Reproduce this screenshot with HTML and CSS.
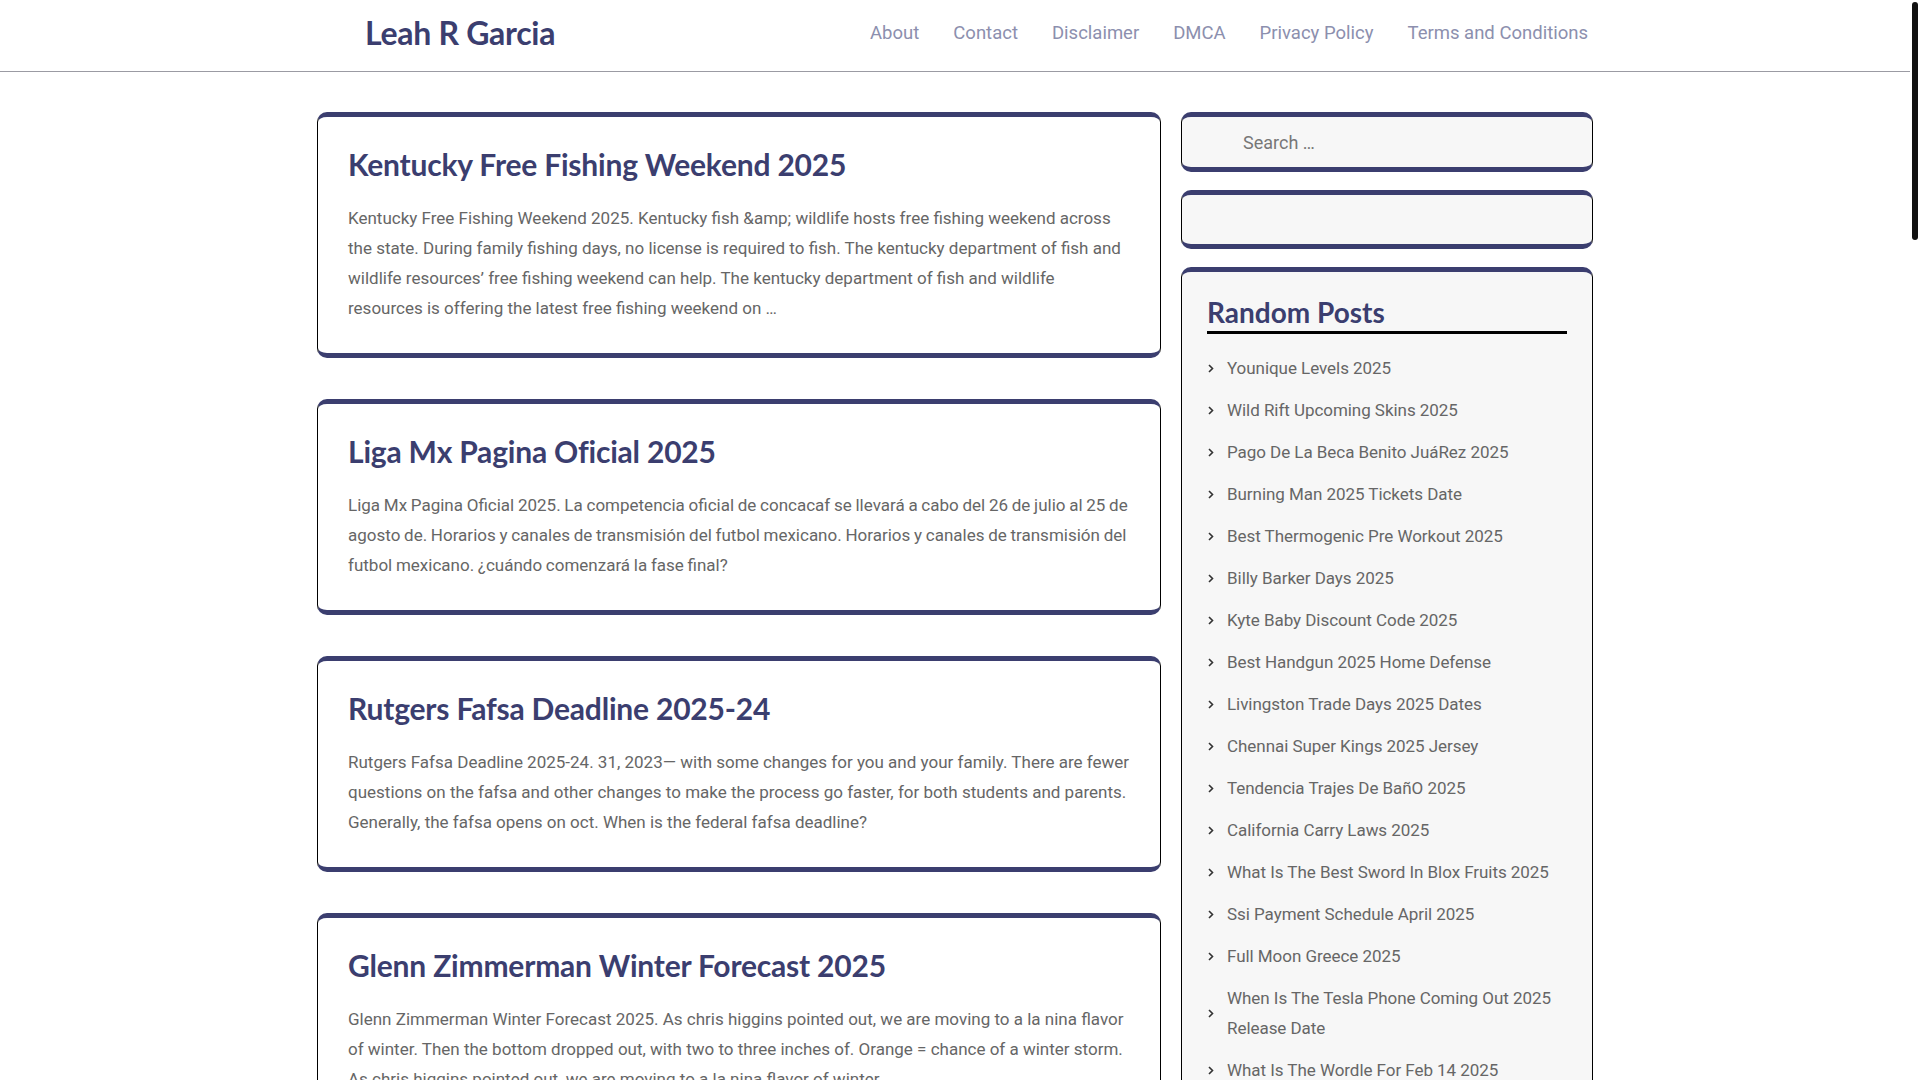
FILE: index.html
```html
<!DOCTYPE html>
<html lang="en">
<head>
<meta charset="utf-8">
<title>Leah R Garcia</title>
<link rel="stylesheet" href="styles.css">
</head>
<body>
<div class="scroll-thumb" aria-hidden="true"></div>
<header class="site-header">
  <div class="header-inner">
    <a class="logo" href="#">Leah R Garcia</a>
    <nav class="main-nav">
      <a href="#">About</a>
      <a href="#">Contact</a>
      <a href="#">Disclaimer</a>
      <a href="#">DMCA</a>
      <a href="#">Privacy Policy</a>
      <a href="#">Terms and Conditions</a>
    </nav>
  </div>
</header>

<div class="container">
  <main class="posts">
    <article class="card">
      <h2 class="post-title">Kentucky Free Fishing Weekend 2025</h2>
      <p class="excerpt">Kentucky Free Fishing Weekend 2025. Kentucky fish &amp;amp; wildlife hosts free fishing weekend across the state. During family fishing days, no license is required to fish. The kentucky department of fish and wildlife resources’ free fishing weekend can help. The kentucky department of fish and wildlife resources is offering the latest free fishing weekend on …</p>
    </article>
    <article class="card">
      <h2 class="post-title">Liga Mx Pagina Oficial 2025</h2>
      <p class="excerpt excerpt--tight">Liga Mx Pagina Oficial 2025. La competencia oficial de concacaf se llevará a cabo del 26 de julio al 25 de agosto de. Horarios y canales de transmisión del futbol mexicano. Horarios y canales de transmisión del futbol mexicano. ¿cuándo comenzará la fase final?</p>
    </article>
    <article class="card">
      <h2 class="post-title">Rutgers Fafsa Deadline 2025-24</h2>
      <p class="excerpt">Rutgers Fafsa Deadline 2025-24. 31, 2023— with some changes for you and your family. There are fewer questions on the fafsa and other changes to make the process go faster, for both students and parents. Generally, the fafsa opens on oct. When is the federal fafsa deadline?</p>
    </article>
    <article class="card">
      <h2 class="post-title">Glenn Zimmerman Winter Forecast 2025</h2>
      <p class="excerpt">Glenn Zimmerman Winter Forecast 2025. As chris higgins pointed out, we are moving to a la nina flavor of winter. Then the bottom dropped out, with two to three inches of. Orange = chance of a winter storm. As chris higgins pointed out, we are moving to a la nina flavor of winter.</p>
    </article>
  </main>

  <aside class="sidebar">
    <div class="widget search-widget">
      <input class="search-field" type="search" placeholder="Search …">
    </div>
    <div class="widget empty-widget"></div>
    <div class="widget list-widget">
      <h3 class="widget-title">Random Posts</h3>
      <ul class="post-list">
        <li><span class="chev"><svg width="6" height="9" viewBox="0 0 6 9"><path d="M1 1l3.5 3.5L1 8" fill="none" stroke="#333" stroke-width="1.6"/></svg></span><a href="#">Younique Levels 2025</a></li>
        <li><span class="chev"><svg width="6" height="9" viewBox="0 0 6 9"><path d="M1 1l3.5 3.5L1 8" fill="none" stroke="#333" stroke-width="1.6"/></svg></span><a href="#">Wild Rift Upcoming Skins 2025</a></li>
        <li><span class="chev"><svg width="6" height="9" viewBox="0 0 6 9"><path d="M1 1l3.5 3.5L1 8" fill="none" stroke="#333" stroke-width="1.6"/></svg></span><a href="#">Pago De La Beca Benito JuáRez 2025</a></li>
        <li><span class="chev"><svg width="6" height="9" viewBox="0 0 6 9"><path d="M1 1l3.5 3.5L1 8" fill="none" stroke="#333" stroke-width="1.6"/></svg></span><a href="#">Burning Man 2025 Tickets Date</a></li>
        <li><span class="chev"><svg width="6" height="9" viewBox="0 0 6 9"><path d="M1 1l3.5 3.5L1 8" fill="none" stroke="#333" stroke-width="1.6"/></svg></span><a href="#">Best Thermogenic Pre Workout 2025</a></li>
        <li><span class="chev"><svg width="6" height="9" viewBox="0 0 6 9"><path d="M1 1l3.5 3.5L1 8" fill="none" stroke="#333" stroke-width="1.6"/></svg></span><a href="#">Billy Barker Days 2025</a></li>
        <li><span class="chev"><svg width="6" height="9" viewBox="0 0 6 9"><path d="M1 1l3.5 3.5L1 8" fill="none" stroke="#333" stroke-width="1.6"/></svg></span><a href="#">Kyte Baby Discount Code 2025</a></li>
        <li><span class="chev"><svg width="6" height="9" viewBox="0 0 6 9"><path d="M1 1l3.5 3.5L1 8" fill="none" stroke="#333" stroke-width="1.6"/></svg></span><a href="#">Best Handgun 2025 Home Defense</a></li>
        <li><span class="chev"><svg width="6" height="9" viewBox="0 0 6 9"><path d="M1 1l3.5 3.5L1 8" fill="none" stroke="#333" stroke-width="1.6"/></svg></span><a href="#">Livingston Trade Days 2025 Dates</a></li>
        <li><span class="chev"><svg width="6" height="9" viewBox="0 0 6 9"><path d="M1 1l3.5 3.5L1 8" fill="none" stroke="#333" stroke-width="1.6"/></svg></span><a href="#">Chennai Super Kings 2025 Jersey</a></li>
        <li><span class="chev"><svg width="6" height="9" viewBox="0 0 6 9"><path d="M1 1l3.5 3.5L1 8" fill="none" stroke="#333" stroke-width="1.6"/></svg></span><a href="#">Tendencia Trajes De BañO 2025</a></li>
        <li><span class="chev"><svg width="6" height="9" viewBox="0 0 6 9"><path d="M1 1l3.5 3.5L1 8" fill="none" stroke="#333" stroke-width="1.6"/></svg></span><a href="#">California Carry Laws 2025</a></li>
        <li><span class="chev"><svg width="6" height="9" viewBox="0 0 6 9"><path d="M1 1l3.5 3.5L1 8" fill="none" stroke="#333" stroke-width="1.6"/></svg></span><a href="#">What Is The Best Sword In Blox Fruits 2025</a></li>
        <li><span class="chev"><svg width="6" height="9" viewBox="0 0 6 9"><path d="M1 1l3.5 3.5L1 8" fill="none" stroke="#333" stroke-width="1.6"/></svg></span><a href="#">Ssi Payment Schedule April 2025</a></li>
        <li><span class="chev"><svg width="6" height="9" viewBox="0 0 6 9"><path d="M1 1l3.5 3.5L1 8" fill="none" stroke="#333" stroke-width="1.6"/></svg></span><a href="#">Full Moon Greece 2025</a></li>
        <li><span class="chev"><svg width="6" height="9" viewBox="0 0 6 9"><path d="M1 1l3.5 3.5L1 8" fill="none" stroke="#333" stroke-width="1.6"/></svg></span><a href="#">When Is The Tesla Phone Coming Out 2025 Release Date</a></li>
        <li><span class="chev"><svg width="6" height="9" viewBox="0 0 6 9"><path d="M1 1l3.5 3.5L1 8" fill="none" stroke="#333" stroke-width="1.6"/></svg></span><a href="#">What Is The Wordle For Feb 14 2025</a></li>
        <li><span class="chev"><svg width="6" height="9" viewBox="0 0 6 9"><path d="M1 1l3.5 3.5L1 8" fill="none" stroke="#333" stroke-width="1.6"/></svg></span><a href="#">Best Budget Gaming Laptop 2025</a></li>
      </ul>
    </div>
  </aside>
</div>
</body>
</html>
```

FILE: styles.css
```css
body {
  margin: 0;
  padding-right: 10px;
  background: #fff;
  font-family: Roboto, "Liberation Sans", Arial, sans-serif;
  color: #666;
}

a {
  text-decoration: none;
  color: inherit;
}

.scroll-thumb {
  position: fixed;
  top: 2px;
  right: 2px;
  width: 6px;
  height: 238px;
  background: #111;
  border-radius: 3px;
}

.site-header {
  border-bottom: 1px solid #9b9ba3;
  height: 71px;
}

.header-inner {
  width: 1276px;
  margin: 0 auto;
  height: 100%;
  display: flex;
  align-items: center;
  justify-content: space-between;
}

.logo {
  margin-left: 48px;
  font-family: Lato, "Noto Sans", sans-serif;
  font-weight: 700;
  font-size: 32px;
  color: #3b3e6f;
  letter-spacing: -0.3px;
  margin-top: -6px;
}

.main-nav {
  display: flex;
  gap: 34px;
  margin-right: 5px;
  margin-top: -5px;
}

.main-nav a {
  font-size: 18.5px;
  color: #8c8fae;
}

.container {
  width: 1276px;
  margin: 40px auto 0;
  display: grid;
  grid-template-columns: 844px 412px;
  column-gap: 20px;
  align-items: start;
}

.posts {
  display: flex;
  flex-direction: column;
  gap: 41px;
}

.card {
  background: #fff;
  border: 1px solid #000;
  border-top: 5px solid #3b3e6f;
  border-bottom: 5px solid #3b3e6f;
  border-radius: 10px;
  padding: 30px 30px 30px;
}

.post-title {
  margin: 0 0 20px;
  font-family: Lato, "Noto Sans", sans-serif;
  font-weight: 700;
  font-size: 30px;
  line-height: 36px;
  color: #3b3e6f;
  letter-spacing: -0.2px;
  position: relative;
  top: -1px;
}

.excerpt {
  margin: 0;
  font-size: 17px;
  line-height: 30px;
  color: #666;
}

.excerpt--tight {
  word-spacing: -0.5px;
}

.sidebar {
  display: flex;
  flex-direction: column;
  gap: 18px;
}

.widget {
  background: #f7f7f7;
  border: 1px solid #000;
  border-top: 5px solid #3b3e6f;
  border-bottom: 5px solid #3b3e6f;
  border-radius: 10px;
}

.search-widget {
  height: 50px;
  display: flex;
  align-items: center;
}

.search-field {
  border: none;
  background: transparent;
  outline: none;
  width: 100%;
  padding: 0 20px 0 61px;
  font-family: Roboto, "Liberation Sans", sans-serif;
  font-size: 18px;
  color: #777;
}

.search-field::placeholder {
  color: #777;
}

.empty-widget {
  height: 49px;
}

.list-widget {
  padding: 25px 25px 20px;
}

.widget-title {
  margin: 0 0 13px;
  padding-bottom: 4px;
  border-bottom: 3px solid #000;
  font-family: Lato, "Noto Sans", sans-serif;
  font-weight: 700;
  font-size: 28px;
  line-height: 30px;
  color: #3b3e6f;
}

.post-list {
  list-style: none;
  margin: 0;
  padding: 0;
}

.post-list li {
  display: flex;
  align-items: center;
  padding: 6px 0;
  font-size: 17px;
  line-height: 30px;
  letter-spacing: -0.05px;
  color: #666;
}

.chev {
  flex: 0 0 auto;
  width: 6px;
  height: 9px;
  margin: 0 13px 0 1px;
  display: flex;
}
```
